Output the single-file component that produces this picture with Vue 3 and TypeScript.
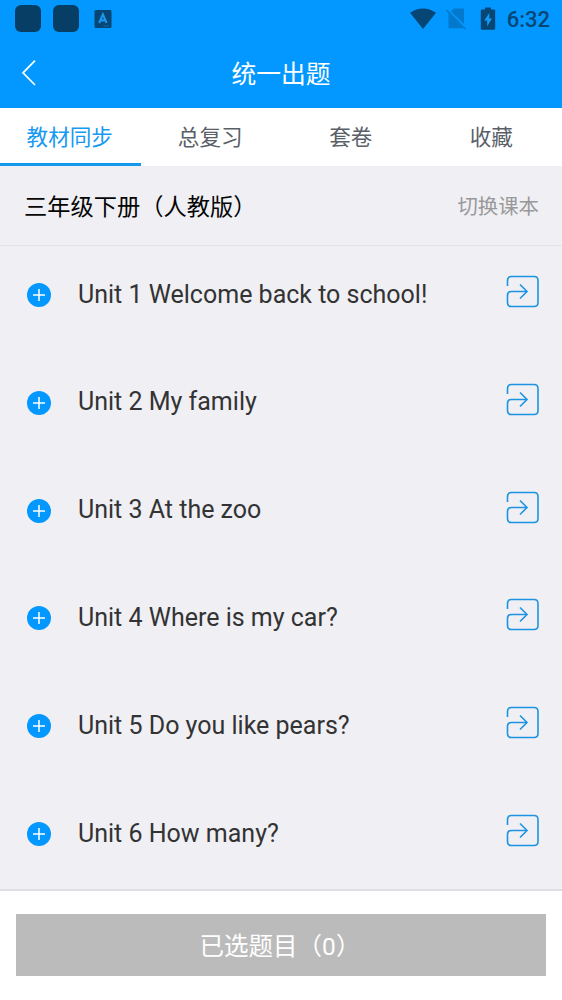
<script setup lang="ts">
import { ref } from 'vue'

const tabs: string[] = ['教材同步', '总复习', '套卷', '收藏']
const activeTab = ref<number>(0)

const units: string[] = [
  'Unit 1 Welcome back to school!',
  'Unit 2 My family',
  'Unit 3 At the zoo',
  'Unit 4 Where is my car?',
  'Unit 5 Do you like pears?',
  'Unit 6 How many?',
]
const selectedCount = ref<number>(0)
</script>

<template>
  <div class="screen">
    <header class="top">
      <div class="status">
        <div class="notices">
          <span class="blob"></span>
          <span class="blob"></span>
          <svg class="app-badge" width="18" height="20" viewBox="0 0 18 20">
            <rect x="0.5" y="1" width="17" height="18" rx="1.5" fill="#064674" />
            <path d="M5.2 14 8.9 5.4 12.6 14M6.6 11.4H11.2" fill="none" stroke="#1c96ec" stroke-width="2.1" />
            <path d="M9.5 17H15.5" stroke="#1c80c8" stroke-width="0.9" stroke-dasharray="1.3 .7" />
          </svg>
        </div>
        <div class="system">
          <svg width="28" height="24" viewBox="0 0 28 24">
            <path d="M1 5.8Q14 -2.8 27 5.8L14 22Z" fill="#064674" />
          </svg>
          <svg class="sim" width="22" height="24" viewBox="0 0 22 24">
            <path d="M8 1.5H18V16.9L5 4.5Z M2.5 5.7 17.5 21.3H2.5Z" fill="#0379cd" />
            <path d="M0.5 3 19.5 22.3" stroke="#0379cd" stroke-width="1.5" />
          </svg>
          <svg class="battery" width="16" height="24" viewBox="0 0 16 24">
            <path d="M5 0.4H11V2.4H14Q15.2 2.4 15.2 3.6V21.6Q15.2 22.8 14 22.8H2Q.8 22.8 .8 21.6V3.6Q.8 2.4 2 2.4H5Z" fill="#064674" />
            <path d="M9.4 6 4.2 13.6H7.2V19.2L12 11.5H9.3Z" fill="#149bf5" />
          </svg>
          <span class="clock">6:32</span>
        </div>
      </div>
      <div class="nav">
        <svg class="back" width="18" height="28" viewBox="0 0 18 28">
          <path d="M15 1.6 3 13.8 15 26" fill="none" stroke="#fff" stroke-width="1.7" />
        </svg>
        <h1>统一出题</h1>
      </div>
    </header>

    <nav class="tabs">
      <button
        v-for="(tab, i) in tabs"
        :key="tab"
        class="tab"
        :class="{ active: i === activeTab }"
        @click="activeTab = i"
      >{{ tab }}</button>
    </nav>

    <section class="book">
      <span class="book-name">三年级下册（人教版）</span>
      <span class="switch">切换课本</span>
    </section>

    <ul class="units">
      <li v-for="unit in units" :key="unit" class="unit">
        <svg class="plus" width="24" height="24" viewBox="0 0 24 24">
          <circle cx="12" cy="12" r="12" fill="#0398ff" />
          <path d="M12 6V18M6 12H18" stroke="#fff" stroke-width="1.5" />
        </svg>
        <span class="unit-name">{{ unit }}</span>
        <svg class="enter" width="33" height="33" viewBox="0 0 33 33" fill="none" stroke="#1c94e2" stroke-width="1.6">
          <path d="M1.5 11V5.5Q1.5 1.5 5.5 1.5H28Q32 1.5 32 5.5V27.5Q32 31.5 28 31.5H5.5Q1.5 31.5 1.5 27.5V20.5Q1.5 16.5 5.5 16.5H20.5" />
          <path d="M14 9.5 21 16.5 14 23.5" />
        </svg>
      </li>
    </ul>

    <footer class="footer">
      <button class="submit">已选题目（{{ selectedCount }}）</button>
    </footer>
  </div>
</template>

<style>
body {
  margin: 0;
}
</style>

<style scoped>
.screen {
  display: flex;
  flex-direction: column;
  width: 562px;
  height: 1000px;
  overflow: hidden;
  background: #efeff4;
  font-family: Roboto, "Noto Sans CJK SC", sans-serif;
}
svg {
  display: block;
  flex: none;
}
.top {
  flex: none;
  height: 108px;
  background: #0398ff;
}
.status {
  display: flex;
  justify-content: space-between;
  height: 38px;
  padding: 0 12px 0 15px;
}
.notices,
.system {
  display: flex;
  align-items: center;
}
.notices {
  padding-bottom: 1px;
}
.blob {
  width: 26px;
  height: 27px;
  margin-right: 11.5px;
  border-radius: 6px;
  background: #063e66;
}
.app-badge {
  margin-left: 4px;
}
.sim {
  margin-left: 9px;
}
.battery {
  margin-left: 12px;
}
.clock {
  margin-left: 11px;
  padding-top: 2px;
  font-size: 22px;
  font-weight: 500;
  line-height: 38px;
  color: #064674;
}
.nav {
  display: grid;
  grid-template-columns: 60px 1fr 60px;
  align-items: center;
  height: 70px;
}
.back {
  margin-left: 20px;
}
h1 {
  margin: 4px 0 0;
  font-size: 24.8px;
  font-weight: 400;
  line-height: 36px;
  text-align: center;
  color: #fff;
}
.tabs {
  display: grid;
  grid-template-columns: repeat(4, 1fr);
  flex: none;
  height: 58px;
  background: #fff;
}
button {
  margin: 0;
  padding: 0;
  border: 0;
  font-family: inherit;
}
.tab {
  padding-right: 1px;
  border-bottom: 3px solid transparent;
  background: none;
  font-size: 21.6px;
  color: #596068;
}
.tab.active {
  border-bottom-color: #1699ec;
  color: #1699f2;
}
.book {
  display: flex;
  flex: none;
  align-items: center;
  justify-content: space-between;
  box-sizing: border-box;
  height: 80px;
  padding: 0 23px 0 24px;
  border-bottom: 1px solid #e4e4e8;
}
.book-name {
  padding-bottom: 2px;
  font-size: 23.25px;
  color: #050505;
}
.switch {
  padding-bottom: 1px;
  font-size: 20.4px;
  color: #999;
}
.units {
  flex: 1;
  min-height: 0;
  margin: 0;
  padding: 0;
  overflow: hidden;
  list-style: none;
}
.unit {
  display: flex;
  align-items: flex-start;
  box-sizing: border-box;
  height: 107.84px;
  padding: 29px 23px 0 27px;
}
.plus {
  margin-top: 8px;
}
.unit-name {
  flex: 1;
  margin-left: 27px;
  padding-top: 0.6px;
  font-size: 25px;
  line-height: 38px;
  color: #333;
}
.footer {
  flex: none;
  box-sizing: border-box;
  height: 111px;
  padding: 23px 16px 0;
  border-top: 2px solid #dedee1;
  background: #fff;
}
.submit {
  display: block;
  width: 530px;
  height: 62px;
  padding: 0 2px 2px 0;
  background: #bbb;
  font-size: 24.5px;
  color: #fff;
}
</style>
